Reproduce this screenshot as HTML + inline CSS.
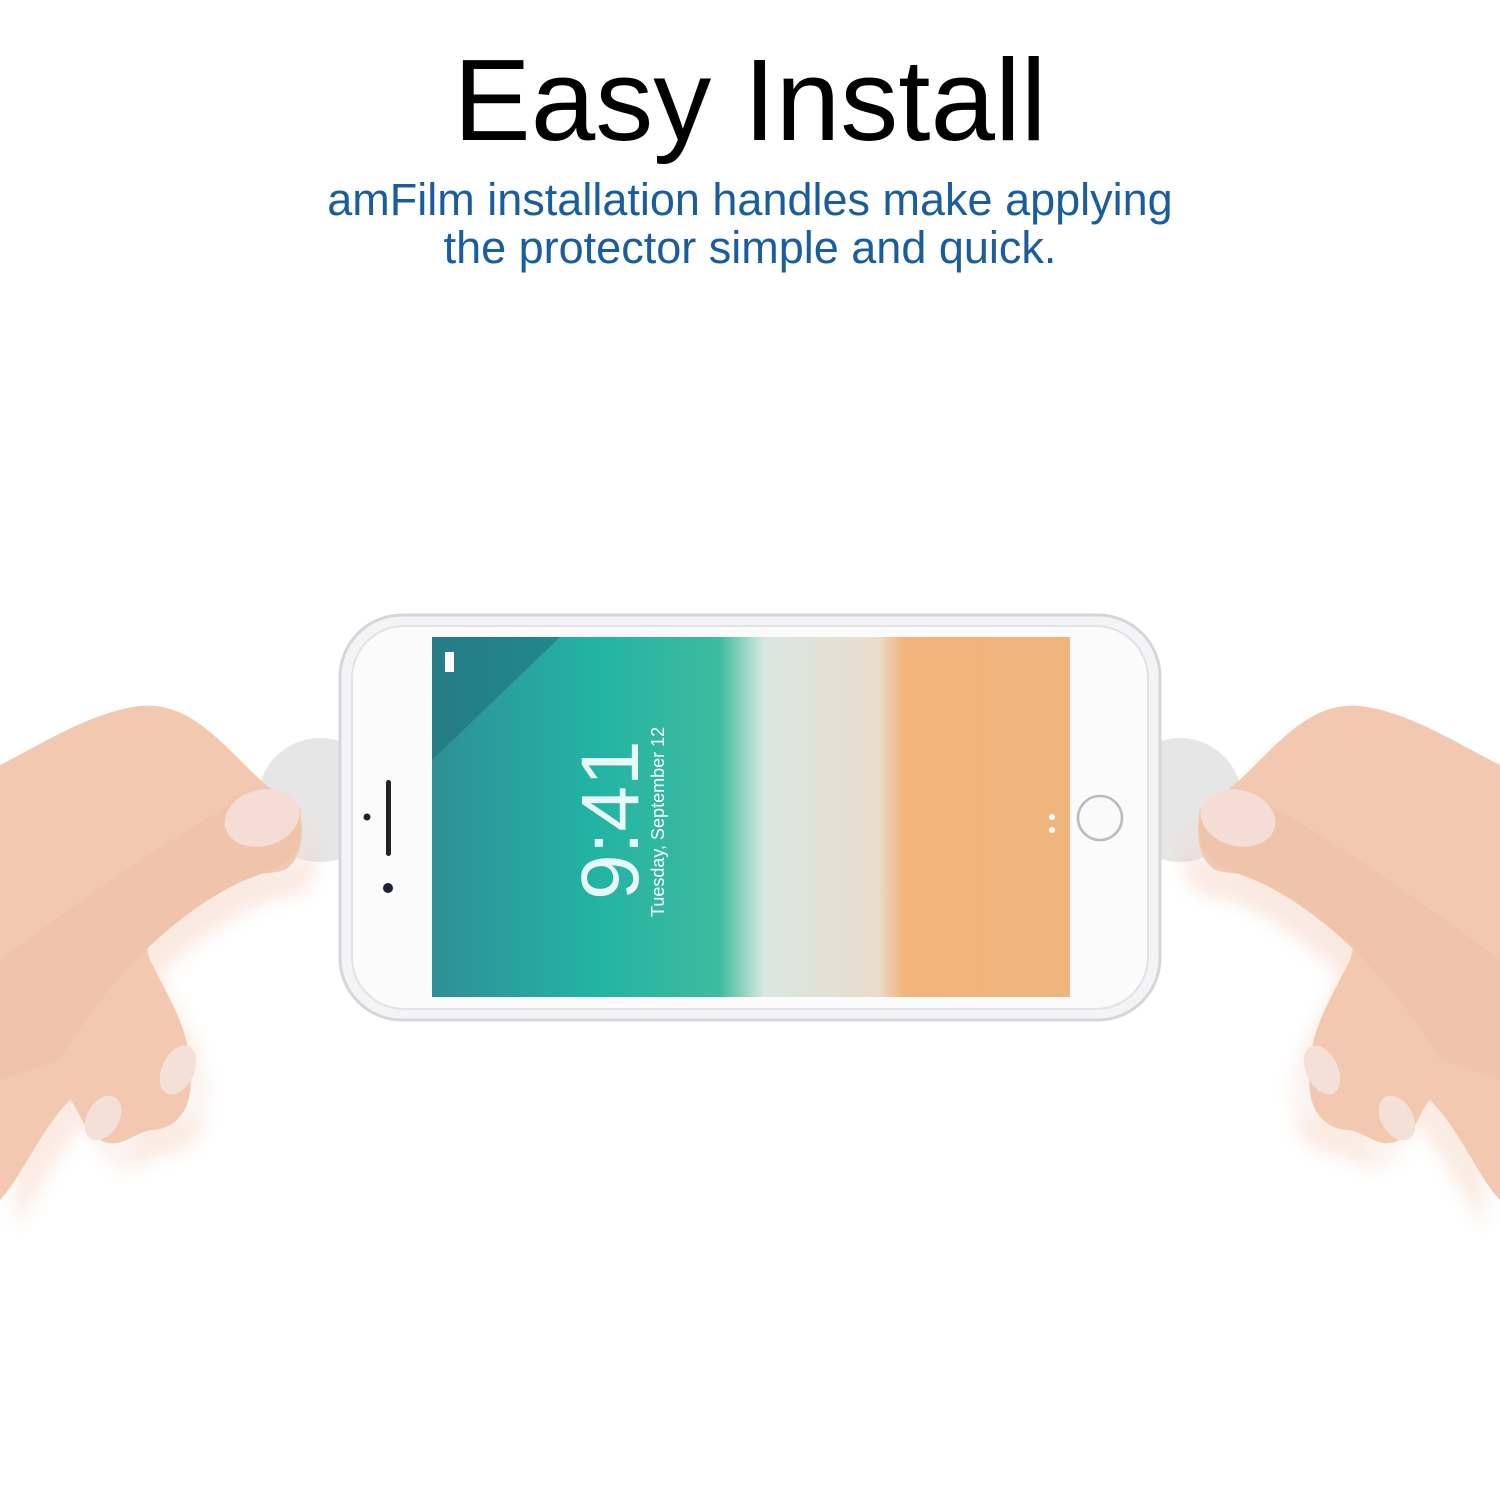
<!DOCTYPE html>
<html><head><meta charset="utf-8"><style>
html,body{margin:0;padding:0;background:#fff;}
body{width:1500px;height:1500px;position:relative;overflow:hidden;font-family:"Liberation Sans",sans-serif;}
h1{position:absolute;top:30px;left:0;width:1500px;text-align:center;margin:0;font-size:116px;font-weight:400;color:#000;line-height:140px;}
.sub{position:absolute;top:176px;left:0;width:1500px;text-align:center;font-size:45px;line-height:48px;color:#1a5d9e;}
svg{position:absolute;left:0;top:0;}
</style></head><body>
<h1>Easy Install</h1>
<div class="sub">amFilm installation handles make applying<br>the protector simple and quick.</div>
<svg width="1500" height="1500" viewBox="0 0 1500 1500">
<defs>
<linearGradient id="scr" x1="0" y1="0" x2="1" y2="0">
<stop offset="0" stop-color="#2f8f96"/>
<stop offset="0.25" stop-color="#22b3a4"/>
<stop offset="0.45" stop-color="#3dbb9e"/>
<stop offset="0.52" stop-color="#d9e8e0"/>
<stop offset="0.7" stop-color="#eadbcc"/>
<stop offset="0.74" stop-color="#f2b47a"/>
<stop offset="1" stop-color="#efb57d"/>
</linearGradient>
<filter id="sh" x="-20%" y="-20%" width="140%" height="140%"><feGaussianBlur stdDeviation="8"/></filter>
<g id="hand">
<path d="M0 765 C40 745 90 712 140 706 C185 702 215 735 250 770 C270 790 285 800 300 808 C305 840 300 860 285 870 C250 880 200 870 170 860 C150 900 140 930 150 960 C170 1000 190 1030 190 1070 C195 1110 175 1130 150 1130 C130 1135 120 1150 100 1140 C85 1135 80 1110 70 1100 C40 1130 20 1180 0 1200 Z" fill="#f2c9b0"/>
<path d="M0 960 C80 900 180 830 250 795 C285 785 305 805 300 840 C295 865 270 870 245 880 C190 905 120 960 60 1060 L0 1080 Z" fill="#f0c4aa"/>
<ellipse cx="262" cy="818" rx="38" ry="28" transform="rotate(-15 262 818)" fill="#f5ddd6"/>
<ellipse cx="178" cy="1070" rx="16" ry="26" transform="rotate(25 178 1070)" fill="#f5e0d8"/>
<ellipse cx="103" cy="1118" rx="16" ry="24" transform="rotate(30 103 1118)" fill="#f5e0d8"/>
</g>
</defs>
<circle cx="320" cy="800" r="62" fill="#e6e6e6"/>
<circle cx="1180" cy="800" r="62" fill="#e6e6e6"/>
<g filter="url(#sh)" opacity="0.35"><use href="#hand" transform="translate(15 25)" fill="#000"/></g>
<g filter="url(#sh)" opacity="0.35"><use href="#hand" transform="translate(1485 25) scale(-1 1)" fill="#000"/></g>
<rect x="340" y="615" width="820" height="405" rx="62" fill="#f4f4f6" stroke="#d6d6da" stroke-width="3"/>
<rect x="352" y="626" width="796" height="383" rx="52" fill="#fbfbfc" stroke="#e3e3e6" stroke-width="2"/>
<rect x="432" y="637" width="638" height="360" fill="url(#scr)"/>
<path d="M432 637 L560 637 L432 760 Z" fill="#1f6f7c" opacity="0.6"/>
<rect x="386" y="780" width="5" height="76" rx="2.5" fill="#222"/>
<circle cx="367" cy="817" r="3.5" fill="#222"/>
<circle cx="388" cy="888" r="5" fill="#1b2233"/>
<circle cx="1100" cy="818" r="22" fill="#fafafa" stroke="#bbb" stroke-width="2.5"/>
<rect x="445" y="652" width="9" height="20" fill="#fff"/>
<text transform="translate(638 900) rotate(-90)" font-family="Liberation Sans" font-size="82" font-weight="300" fill="#fff" fill-opacity="0.9">9:41</text>
<text transform="translate(664 917) rotate(-90)" font-family="Liberation Sans" font-size="18" fill="#fff">Tuesday, September 12</text>
<circle cx="1052" cy="817" r="3" fill="#fff"/><circle cx="1052" cy="830" r="3" fill="#fff"/>
<use href="#hand"/>
<use href="#hand" transform="translate(1500 0) scale(-1 1)"/>
</svg>
</body></html>
